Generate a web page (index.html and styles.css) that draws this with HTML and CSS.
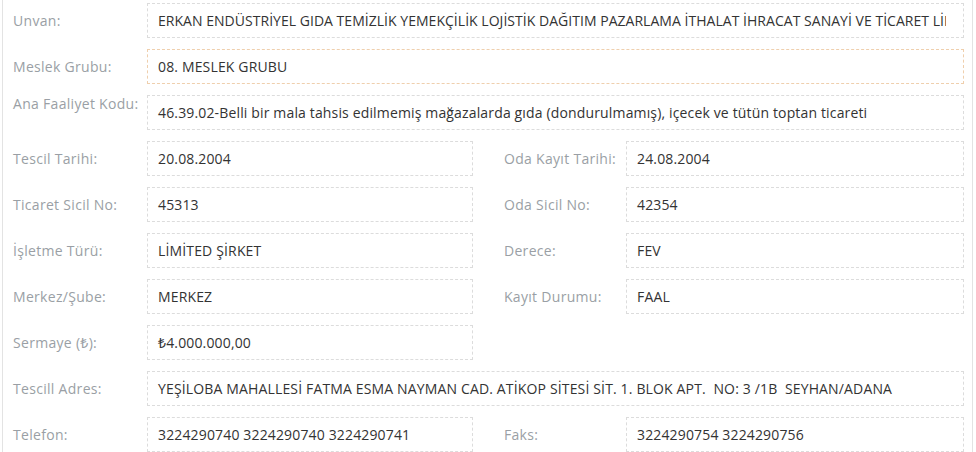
FILE: index.html
```html
<!DOCTYPE html>
<html lang="tr">
<head>
<meta charset="utf-8">
<title>Firma Bilgileri</title>
<link rel="stylesheet" href="styles.css">
</head>
<body>
<div class="panel">
  <div class="row">
    <div class="label">Unvan:</div>
    <div class="value full"><span class="clip">ERKAN ENDÜSTRİYEL GIDA TEMİZLİK YEMEKÇİLİK LOJİSTİK DAĞITIM PAZARLAMA İTHALAT İHRACAT SANAYİ VE TİCARET LİMİTED ŞİRKETİ</span></div>
  </div>
  <div class="row">
    <div class="label">Meslek Grubu:</div>
    <div class="value full accent">08. MESLEK GRUBU</div>
  </div>
  <div class="row">
    <div class="label top">Ana Faaliyet Kodu:</div>
    <div class="value full">46.39.02-Belli bir mala tahsis edilmemiş mağazalarda gıda (dondurulmamış), içecek ve tütün toptan ticareti</div>
  </div>
  <div class="row">
    <div class="label">Tescil Tarihi:</div>
    <div class="value">20.08.2004</div>
    <div class="label right">Oda Kayıt Tarihi:</div>
    <div class="value">24.08.2004</div>
  </div>
  <div class="row">
    <div class="label">Ticaret Sicil No:</div>
    <div class="value">45313</div>
    <div class="label right">Oda Sicil No:</div>
    <div class="value">42354</div>
  </div>
  <div class="row">
    <div class="label">İşletme Türü:</div>
    <div class="value">LİMİTED ŞİRKET</div>
    <div class="label right">Derece:</div>
    <div class="value">FEV</div>
  </div>
  <div class="row">
    <div class="label">Merkez/Şube:</div>
    <div class="value">MERKEZ</div>
    <div class="label right">Kayıt Durumu:</div>
    <div class="value">FAAL</div>
  </div>
  <div class="row">
    <div class="label">Sermaye (₺):</div>
    <div class="value">₺4.000.000,00</div>
  </div>
  <div class="row">
    <div class="label">Tescill Adres:</div>
    <div class="value full">YEŞİLOBA MAHALLESİ FATMA ESMA NAYMAN CAD. ATİKOP SİTESİ SİT. 1. BLOK APT.&nbsp; NO: 3 /1B&nbsp; SEYHAN/ADANA</div>
  </div>
  <div class="row">
    <div class="label">Telefon:</div>
    <div class="value">3224290740 3224290740 3224290741</div>
    <div class="label right">Faks:</div>
    <div class="value">3224290754 3224290756</div>
  </div>
</div>
</body>
</html>
```

FILE: styles.css
```css
html, body {
  margin: 0;
  padding: 0;
  background: #ffffff;
}

body {
  font-family: "Open Sans", "Noto Sans", sans-serif;
  font-size: 14px;
  color: #333333;
}

.panel {
  margin-left: 2px;
  width: 959px;
  border-left: 1px solid #e3e3e3;
  border-right: 1px solid #e3e3e3;
  padding: 3px 0 0 10px;
  box-sizing: content-box;
  height: 449px;
}

.row {
  display: grid;
  grid-template-columns: 134px 326px 31px 122px 338px;
  align-items: center;
  margin-bottom: 11px;
}

.label {
  color: #9a9fa5;
  white-space: nowrap;
  line-height: 18px;
  letter-spacing: 0.3px;
}

.label.top {
  align-self: start;
}

.label.right {
  grid-column: 4;
}

.value {
  height: 35px;
  box-sizing: border-box;
  border: 1px dashed #dcdcdc;
  padding: 0 10px;
  line-height: 33px;
  white-space: nowrap;
  overflow: hidden;
  color: #333333;
  letter-spacing: 0.15px;
}

.value.full {
  grid-column: 2 / 6;
}

.value.accent {
  border-color: #efcfad;
}

.clip {
  display: block;
  overflow: hidden;
  margin-right: 7px;
  letter-spacing: 0.03px;
}
```
